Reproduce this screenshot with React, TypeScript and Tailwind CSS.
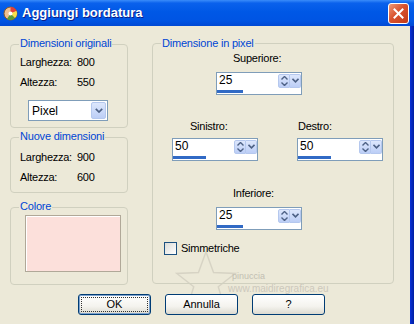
import React from "react";

const font = { fontFamily: '"Liberation Sans", Arial, sans-serif' };

function Group({
  label,
  className,
  labelClass,
  children,
}: {
  label: string;
  className: string;
  labelClass: string;
  children?: React.ReactNode;
}) {
  return (
    <div className={`relative rounded-[4px] border border-[#D0D0BF] ${className}`}>
      <span
        className={`absolute bg-[#ECE9D8] px-[1px] text-[11px] leading-[13px] tracking-[-0.2px] text-[#0046D5] ${labelClass}`}
      >
        {label}
      </span>
      {children}
    </div>
  );
}

function Row({ label, value, className = "" }: { label: string; value: string; className?: string }) {
  return (
    <div className={`flex h-[20px] items-center pl-[9px] text-[11px] tracking-[-0.25px] text-black ${className}`}>
      <span className="w-[57px]">{label}</span>
      <span>{value}</span>
    </div>
  );
}

function SpinArrows() {
  return (
    <div className="flex h-[14px] w-[23px] shrink-0">
      <div className="flex w-[12px] flex-col items-center justify-center gap-[2px] rounded-l-[2px] border border-[#B5C8EE] bg-[linear-gradient(to_bottom,#DDE7FC,#BCCEF6)]">
        <svg width="7" height="4" viewBox="0 0 7 4">
          <path d="M0.5 3.5 L3.5 0.5 L6.5 3.5" fill="none" stroke="#4D6185" strokeWidth="1.4" />
        </svg>
        <svg width="7" height="4" viewBox="0 0 7 4">
          <path d="M0.5 0.5 L3.5 3.5 L6.5 0.5" fill="none" stroke="#4D6185" strokeWidth="1.4" />
        </svg>
      </div>
      <div className="flex w-[11px] items-center justify-center rounded-r-[2px] border border-l-0 border-[#B5C8EE] bg-[linear-gradient(to_bottom,#DDE7FC,#BCCEF6)]">
        <svg width="7" height="5" viewBox="0 0 7 5">
          <path d="M0.5 0.8 L3.5 3.8 L6.5 0.8" fill="none" stroke="#4D6185" strokeWidth="1.6" />
        </svg>
      </div>
    </div>
  );
}

function Spin({ value, bar, className = "" }: { value: string; bar: number; className?: string }) {
  return (
    <div className={`flex h-[23px] w-[86px] flex-col border border-[#7F9DB9] bg-white ${className}`}>
      <div className="flex h-[15px] items-center justify-between">
        <span className="pl-[2px] text-[12px] leading-[15px] text-black">{value}</span>
        <SpinArrows />
      </div>
      <div className="mt-[2px] h-[3px] bg-[#316AC5]" style={{ width: bar }} />
    </div>
  );
}

function Button({ label, primary = false }: { label: string; primary?: boolean }) {
  return (
    <div
      className={`flex h-[21px] w-[73px] items-center justify-center rounded-[3px] border border-[#003C74] bg-[linear-gradient(to_bottom,#FFFFFF,#F4F3EE_60%,#DCDAD0)] text-[11px] text-black ${
        primary ? "shadow-[inset_0_0_0_1px_#7DA2CE]" : ""
      }`}
    >
      {primary ? (
        <div className="flex h-[15px] w-[67px] items-center justify-center border border-dotted border-[#333]">{label}</div>
      ) : (
        label
      )}
    </div>
  );
}

const small = "text-[11px] leading-[13px] tracking-[-0.25px] text-black";

export default function App() {
  return (
    <div className="h-[324px] w-[414px] overflow-hidden bg-[#ECE9D8]" style={font}>
      {/* title bar */}
      <div className="flex h-[26px] items-center bg-[linear-gradient(to_bottom,#3A8CFA_0%,#0A61EC_12%,#0058E6_45%,#0054E3_80%,#0149D4_100%)] pl-[3px] pr-[6px]">
        <svg width="15" height="15" viewBox="0 0 15 15" className="shrink-0">
          <circle cx="7.5" cy="7.5" r="6.5" fill="#F0C090" stroke="#8A5A2A" strokeWidth="1" />
          <path d="M7.5 7.5 L7.5 1 A6.5 6.5 0 0 1 13.5 5 Z" fill="#E0403A" />
          <path d="M7.5 7.5 L13.5 5 A6.5 6.5 0 0 1 12 12 Z" fill="#F7E04A" />
          <path d="M7.5 7.5 L12 12 A6.5 6.5 0 0 1 4 13 Z" fill="#5A9A3A" />
          <circle cx="7.5" cy="7.5" r="2" fill="#FFFFFF" />
        </svg>
        <span className="ml-[4px] text-[13px] font-bold text-white [text-shadow:1px_1px_0_#0A1E8A]">
          Aggiungi bordatura
        </span>
        <div className="ml-auto mr-[-1px] flex h-[21px] w-[21px] items-center justify-center rounded-[3px] border border-white bg-[linear-gradient(135deg,#F09A78,#D9532F_45%,#C23A18)]">
          <svg width="11" height="11" viewBox="0 0 11 11">
            <path d="M1.5 1.5 L9.5 9.5 M9.5 1.5 L1.5 9.5" stroke="#FFFFFF" strokeWidth="2" strokeLinecap="square" />
          </svg>
        </div>
      </div>

      <div className="flex h-[298px]">
        <div className="relative flex w-[410px] flex-col">
          {/* watermark, behind the controls */}
          <div className="pointer-events-none absolute left-[172px] top-[222px] opacity-40">
            <svg width="68" height="66" viewBox="0 0 70 70">
              <path
                d="M35 4 L43 26 L66 27 L48 41 L55 64 L35 51 L15 64 L22 41 L4 27 L27 26 Z"
                fill="none"
                stroke="#B8B4A8"
                strokeWidth="1.5"
              />
            </svg>
          </div>
          <span className="pointer-events-none absolute left-[232px] top-[245px] text-[9px] leading-[10px] text-[#C2BEB2]">
            pinuccia
          </span>
          <span className="pointer-events-none absolute left-[228px] top-[257px] text-[10px] leading-[11px] text-[#CCC8BC]">
            www.maidiregrafica.eu
          </span>

          <div className="relative flex pl-[10px] pt-[17px]">
            {/* left column */}
            <div className="mt-[1px] flex w-[118px] flex-col">
              <Group label="Dimensioni originali" className="h-[84px]" labelClass="left-[8px] top-[-8px]">
                <Row label="Larghezza:" value="800" className="mt-[7px]" />
                <Row label="Altezza:" value="550" />
                <div className="ml-[17px] mt-[8px] flex h-[21px] w-[80px] items-center justify-between border border-[#7F9DB9] bg-white pr-[1px]">
                  <span className="pl-[3px] text-[12px] text-black">Pixel</span>
                  <div className="flex h-[17px] w-[15px] items-center justify-center rounded-[2px] border border-[#B5C8EE] bg-[linear-gradient(to_bottom,#DDE7FC,#BCCEF6)]">
                    <svg width="8" height="5" viewBox="0 0 8 5">
                      <path d="M0.8 0.8 L4 4 L7.2 0.8" fill="none" stroke="#4D6185" strokeWidth="1.7" />
                    </svg>
                  </div>
                </div>
              </Group>

              <Group label="Nuove dimensioni" className="mt-[9px] h-[56px]" labelClass="left-[8px] top-[-8px]">
                <Row label="Larghezza:" value="900" className="mt-[9px]" />
                <Row label="Altezza:" value="600" />
              </Group>

              <Group label="Colore" className="mt-[14px] h-[78px]" labelClass="left-[8px] top-[-8px]">
                <div className="ml-[14px] mt-[7px] h-[57px] w-[96px] border border-[#B0A898] bg-[#FCE0DB] shadow-[inset_1px_1px_0_#FFFFFF]" />
              </Group>
            </div>

            {/* right column */}
            <Group
              label="Dimensione in pixel"
              className="ml-[24px] flex h-[241px] w-[242px] flex-col"
              labelClass="left-[8px] top-[-7px]"
            >
              <span className={`ml-[80px] mt-[8px] ${small}`}>Superiore:</span>
              <Spin value="25" bar={26} className="ml-[63px] mt-[7px]" />

              <div className={`mt-[25px] flex ${small}`}>
                <span className="ml-[37px] w-[108px]">Sinistro:</span>
                <span>Destro:</span>
              </div>
              <div className="mt-[5px] flex">
                <Spin value="50" bar={33} className="ml-[19px]" />
                <Spin value="50" bar={33} className="ml-[39px]" />
              </div>

              <span className={`ml-[80px] mt-[26px] ${small}`}>Inferiore:</span>
              <Spin value="25" bar={26} className="ml-[63px] mt-[7px]" />

              <div className="ml-[11px] mt-[12px] flex items-center">
                <div className="h-[13px] w-[13px] border border-[#1C5180] bg-[linear-gradient(135deg,#DCDCD7,#FFFFFF)]" />
                <span className={`ml-[4px] ${small}`}>Simmetriche</span>
              </div>
            </Group>
          </div>

          {/* buttons */}
          <div className="relative mt-[9px] flex gap-[14px] pl-[78px]">
            <Button label="OK" primary />
            <Button label="Annulla" />
            <Button label="?" />
          </div>
        </div>
        <div className="w-[4px] bg-[linear-gradient(to_right,#0831D9,#001EA0)]" />
      </div>
    </div>
  );
}
